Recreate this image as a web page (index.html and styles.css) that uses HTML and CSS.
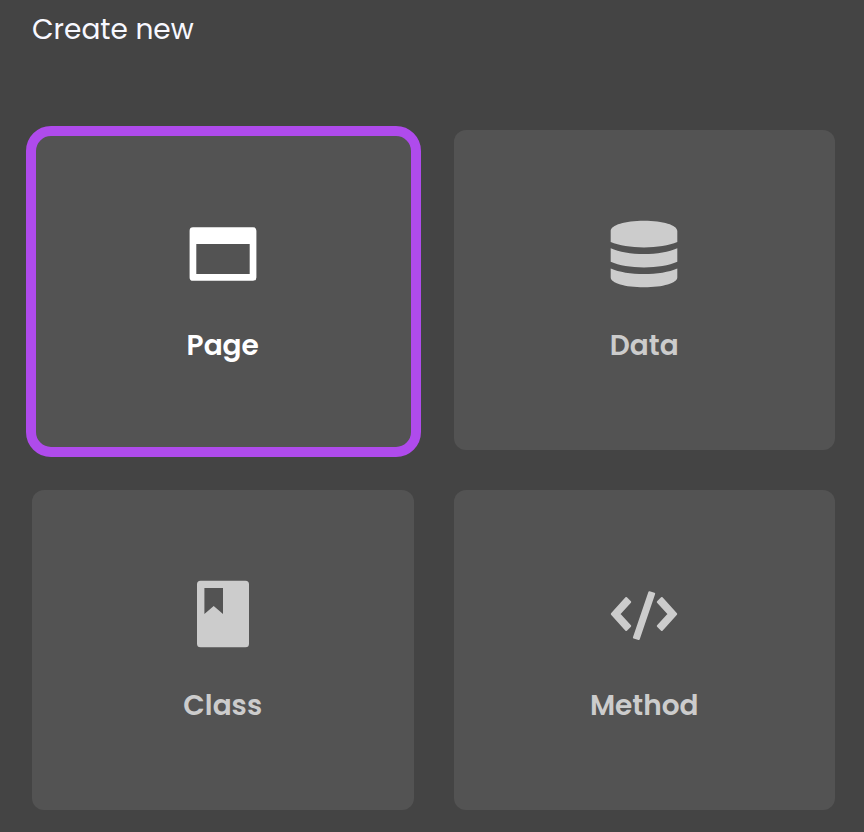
FILE: index.html
```html
<!DOCTYPE html>
<html lang="en">
<head>
<meta charset="utf-8">
<meta name="viewport" content="width=device-width, initial-scale=1">
<title>Create new</title>
<link rel="stylesheet" href="styles.css">
</head>
<body>
<main class="create">
  <h1 class="title">Create new</h1>
  <div class="grid">
    <button class="card selected" type="button" aria-pressed="true">
      <svg class="icon" viewBox="0 0 80 80" aria-hidden="true"><path fill-rule="evenodd" d="M10 13.3H70Q73.4 13.3 73.4 16.7V63.4Q73.4 66.8 70 66.8H10Q6.6 66.8 6.6 63.4V16.7Q6.6 13.3 10 13.3ZM13.3 30V60H66.7V30Z"/></svg>
      <span class="label">Page</span>
    </button>
    <button class="card" type="button" aria-pressed="false">
      <svg class="icon" viewBox="0 0 80 80" aria-hidden="true"><path d="M6.7 17C6.7 11 21 6.7 40 6.7S73.3 11 73.3 17V28C65 31.5 53 33.4 40 33.4S15 31.5 6.7 28ZM6.7 34.2C15 38 27 40 40 40S65 38 73.3 34.2V47.8C65 51.5 53 53.4 40 53.4S15 51.5 6.7 47.8ZM6.7 54.4C15 58 27 60 40 60S65 58 73.3 54.4V63.5C73.3 69 59 73.3 40 73.3S6.7 69 6.7 63.5Z"/></svg>
      <span class="label">Data</span>
    </button>
    <button class="card" type="button" aria-pressed="false">
      <svg class="icon" viewBox="0 0 80 80" aria-hidden="true"><path fill-rule="evenodd" d="M17.5 6.7H62.5Q66 6.7 66 10.2V69.8Q66 73.3 62.5 73.3H17.5Q14 73.3 14 69.8V10.2Q14 6.7 17.5 6.7ZM21.4 14V40L30.7 32L40 40V14Z"/></svg>
      <span class="label">Class</span>
    </button>
    <button class="card" type="button" aria-pressed="false">
      <svg class="icon" viewBox="0 0 80 80" aria-hidden="true"><path stroke-width="2" stroke-linejoin="round" d="M7.8 40L22.2 24L26.2 28L15.2 40L26.2 52L22.2 56ZM72.2 40L57.8 24L53.8 28L64.8 40L53.8 52L57.8 56ZM45.3 18.2L50.2 19.7L34.8 65L29.9 63.5Z"/></svg>
      <span class="label">Method</span>
    </button>
  </div>
</main>
</body>
</html>
```
FILE: styles.css
```css
* {
  box-sizing: border-box;
}

body {
  margin: 0;
  background: #444;
  color: #f8f8ff;
  font-family: Poppins, Inter, sans-serif;
}

.create {
  padding: 10px 29px 22px 32px;
}

.title {
  margin: 0 0 80px;
  font-size: 28px;
  line-height: 40px;
  font-weight: 400;
}

.grid {
  display: grid;
  grid-template-columns: 1fr 1fr;
  gap: 40px;
}

.card {
  position: relative;
  display: flex;
  flex-direction: column;
  align-items: center;
  justify-content: center;
  gap: 32px;
  min-height: 320px;
  padding: 24px;
  border: 0;
  border-radius: 12px;
  background: #535353;
  color: #ccc;
  font: inherit;
  cursor: pointer;
}

.selected {
  color: #fff;
}

/* Ring drawn around the chosen card */
.selected::after {
  content: "";
  position: absolute;
  inset: -4px -7px -7px -6px;
  border: 10px solid #af4bec;
  border-radius: 25px;
}

.icon {
  width: 80px;
  height: 80px;
  fill: currentColor;
  stroke: currentColor;
  stroke-width: 0;
}

.label {
  font-size: 28px;
  line-height: 40px;
  font-weight: 600;
}
```
